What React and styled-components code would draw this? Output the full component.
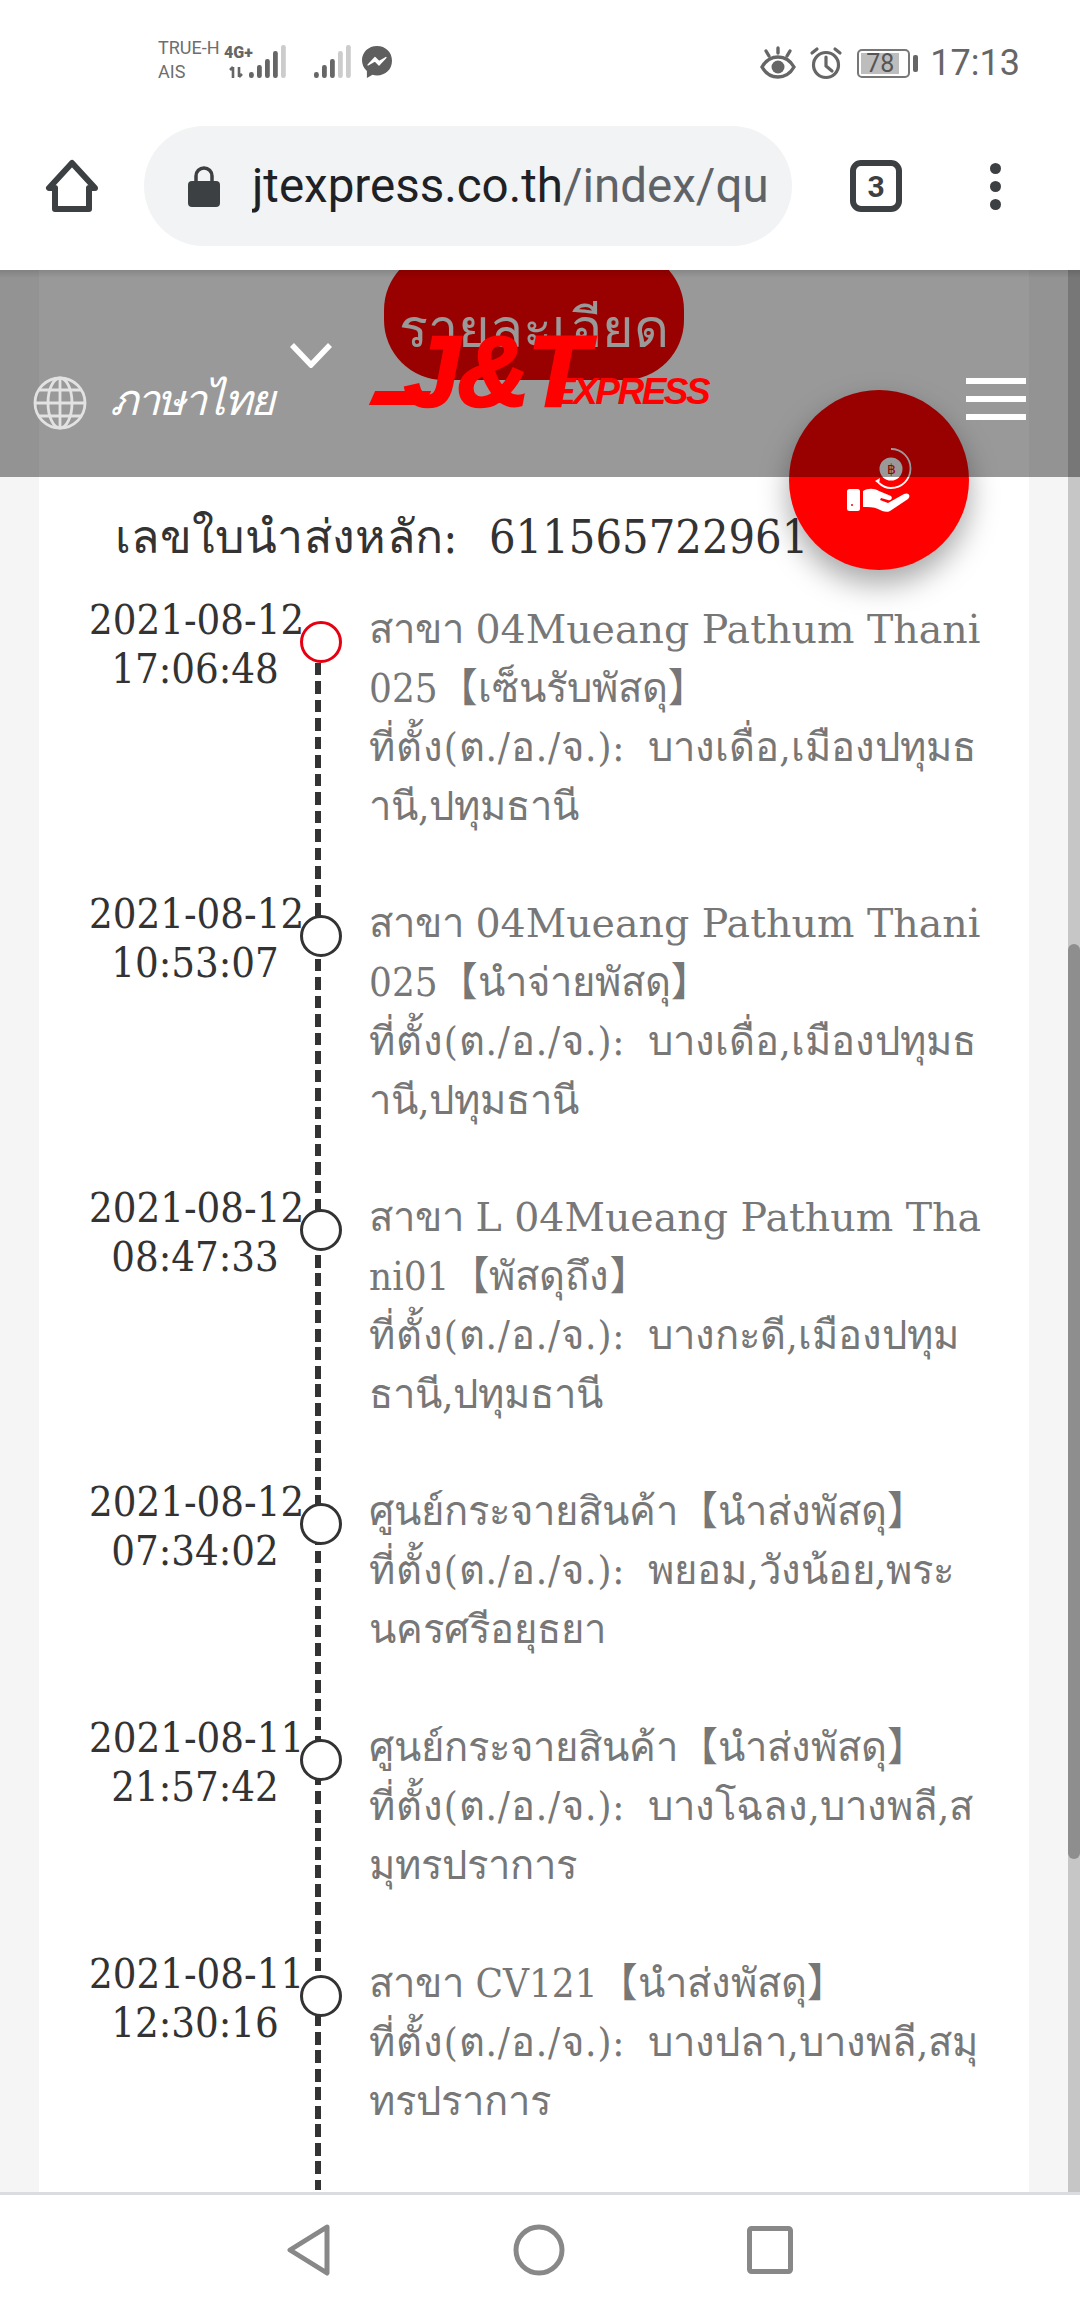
import React from "react";
import styled, { createGlobalStyle } from "styled-components";

const Global = createGlobalStyle`
  html, body { margin: 0; padding: 0; background: #fff; }
  #root { width: 1080px; height: 2310px; overflow: hidden; }
`;

const SANS = `Roboto, "Liberation Sans", sans-serif`;
const SERIF = `"DejaVu Serif", "Noto Sans CJK SC", serif`;

const Screen = styled.div`
  width: 1080px; height: 2310px; display: flex; flex-direction: column;
  font-family: ${SANS}; background: #fff; overflow: hidden;
`;
const StatusBar = styled.div`
  height: 120px; flex: none; display: flex; align-items: flex-start;
  padding: 45px 60px 0 158px; box-sizing: border-box; color: #666;
`;
const Carriers = styled.div`
  display: flex; flex-direction: column; font-size: 18px; line-height: 24px; width: 66px; color: #6e6e6e; margin-top: -9px;
`;
const Arrows = styled.svg`
  flex: none; overflow: visible;
`;
const Gap = styled.div`
  width: 25px; flex: none;
`;
const StatusRight = styled.div`
  margin-left: auto; display: flex; align-items: center; height: 36px;
`;
const Battery = styled.div`
  width: 53px; height: 29px; box-sizing: border-box; border: 2px solid #777; border-radius: 5px;
  margin-left: 14px; padding: 2px; display: flex;
`;
const BatteryFill = styled.div`
  width: 38px; background: #bdbdbd; display: flex; align-items: center; justify-content: center;
  font-size: 25px; color: #555; line-height: 1;
`;
const BatteryNub = styled.div`
  width: 5px; height: 17px; background: #666; border-radius: 2px; margin-left: 3px;
`;
const Clock = styled.div`
  font-size: 36px; margin-left: 12px; color: #666; line-height: 36px;
`;

const BrowserBar = styled.div`
  height: 150px; flex: none; display: flex; align-items: center; padding-bottom: 18px; box-sizing: border-box;
`;
const HomeSlot = styled.div`
  width: 144px; flex: none; display: flex; padding-left: 45px; box-sizing: border-box;
`;
const UrlPill = styled.div`
  width: 648px; height: 120px; border-radius: 60px; background: #f1f3f4; flex: none;
  display: flex; align-items: center; padding-left: 44px; box-sizing: border-box;
`;
const UrlText = styled.div`
  width: 516px; margin-left: 32px; overflow: hidden; white-space: nowrap;
  font-size: 47.5px; line-height: 60px; color: #202124;
  span { color: #5f6368; }
`;
const TabCount = styled.div`
  width: 52px; height: 52px; margin-left: 58px; box-sizing: border-box; border: 6px solid #3c4043; border-radius: 11px;
  display: flex; align-items: center; justify-content: center; font-size: 30px; font-weight: 700; color: #3c4043;
`;
const Dots = styled.div`
  margin-left: 88px; display: flex; flex-direction: column; gap: 7px;
  i { display: block; width: 11px; height: 11px; border-radius: 50%; background: #3c4043; }
`;

const WebView = styled.div`
  flex: none; height: 1922px; position: relative; background: #f5f5f5; overflow: hidden;
`;
const Panel = styled.div`
  margin-left: 39px; width: 990px; height: 100%; background: #fff; box-sizing: border-box; padding-top: 207px;
  font-family: ${SERIF}; font-stretch: condensed;
`;
const Title = styled.div`
  margin-left: 76px; height: 119px; padding-top: 33px; box-sizing: border-box;
  font-size: 46.5px; line-height: 54px; color: #333; white-space: pre; display: flex;
`;
const TitleLabel = styled.span`
  width: 374px; flex: none; letter-spacing: 0.3px;
`;
const Timeline = styled.div`
  position: relative; padding-left: 50px;
  height: 1594px;
`;
const DashLine = styled.div`
  position: absolute; left: 276px; top: 30px; bottom: 0; width: 6px;
  background: repeating-linear-gradient(to bottom, #333 0 12.5px, transparent 12.5px 18.5px);
`;
const Row = styled.div`
  display: flex; position: relative; padding-bottom: ${p => (p.$short ? "55px" : "54px")};
`;
const Stamp = styled.div`
  width: 212px; flex: none; text-align: center; font-size: 41.5px; line-height: 49px; color: #333; white-space: nowrap;
  margin-top: -1px;
`;
const Dot = styled.div`
  position: absolute; left: 211px; top: 25px; width: 42px; height: 42px; box-sizing: border-box; border-radius: 50%;
  background: #fff; border: 3px solid ${p => (p.$active ? "#e60012" : "#333")};
`;
const Detail = styled.div`
  margin-left: 68px; padding-top: 4px; font-size: 40px; color: #777;
`;
const Line = styled.div`
  height: 59px; line-height: 59px; white-space: pre;
`;
const Wide = styled.span`
  font-stretch: normal; font-size: 39.5px;
`;
const LocLabel = styled.span`
  letter-spacing: 0.9px;
`;

const ScrollTrack = styled.div`
  position: absolute; right: 0; top: 0; bottom: 0; width: 12px; background: #c6c6c6;
`;
const ScrollThumb = styled.div`
  position: absolute; right: 0; top: 674px; height: 915px; width: 12px; background: #8e8e8e; border-radius: 8px;
`;
const DetailsButton = styled.div`
  position: absolute; left: 384px; top: -20px; width: 300px; height: 130px; border-radius: 60px; background: #f00;
  color: #fff; display: flex; align-items: center; justify-content: center; font-family: ${SANS};
  font-size: 54px; padding-top: 26px; box-sizing: border-box; white-space: nowrap;
`;
const Fab = styled.div`
  position: absolute; left: 789px; top: 120px; width: 180px; height: 180px; border-radius: 50%; background: #f00;
  box-shadow: 0 14px 30px rgba(0,0,0,.35); display: flex; align-items: center; justify-content: center;
`;
const Overlay = styled.div`
  position: absolute; left: 0; right: 0; top: 0; height: 207px; background: rgba(0,0,0,.4);
  &::before { content: ""; position: absolute; left: 0; right: 0; top: 0; height: 8px;
    background: linear-gradient(to bottom, rgba(0,0,0,.12), transparent); }
`;
const Nav = styled.div`
  position: absolute; left: 0; right: 0; top: 0; height: 207px; display: flex; align-items: flex-start;
  padding: 0 54px 0 33px; box-sizing: border-box; font-family: ${SANS};
`;
const LangGroup = styled.div`
  display: flex; align-items: flex-start; width: 339px; flex: none; color: #fff; padding-top: 72px; box-sizing: border-box;
`;
const GlobeSlot = styled.div`
  margin-top: 34px; flex: none; display: flex;
`;
const LangLabel = styled.div`
  margin-left: 23px; margin-top: 32px; width: 180px; font-size: 43px; line-height: 52px; font-style: italic;
  white-space: nowrap; font-weight: 300; letter-spacing: -2.4px;
`;
const Logo = styled.div`
  position: relative; width: 338px; height: 75px; margin-top: 60px; color: #f00; font-family: "Liberation Sans", sans-serif;
  font-weight: 700; font-style: italic; white-space: nowrap; display: flex; align-items: flex-end; flex: none;
`;
const LogoMain = styled.div`
  font-size: 100px; line-height: 75px; margin-left: 32px; margin-bottom: -4px; letter-spacing: -2px; -webkit-text-stroke: 2.5px #f00;
`;
const LogoTail = styled.div`
  position: absolute; left: 0; bottom: 0; width: 56px; height: 14px; background: #f00; transform: skewX(-24deg);
`;
const LogoSub = styled.div`
  font-size: 37px; line-height: 30px; margin-left: -36px; margin-bottom: -2px; letter-spacing: -2.5px;
`;
const Burger = styled.div`
  margin-left: auto; margin-top: 108px; display: flex; flex-direction: column; gap: 12px;
  i { display: block; width: 60px; height: 6px; background: #fff; }
`;

const NavBar = styled.div`
  flex: 1; border-top: 3px solid #dadce0; background: #fff; display: flex; align-items: center; justify-content: center;
  padding-bottom: 5px; gap: 182px;
`;

const Eye = () => (
  <svg width="36" height="34" viewBox="0 0 36 34" fill="none" stroke="#666" strokeWidth="3.4" strokeLinecap="round">
    <path d="M2 21C6 14 12 11 18 11s12 3 16 10c-4 7-10 10-16 10S6 28 2 21Z" />
    <circle cx="18" cy="21" r="6.5" fill="#666" stroke="none" />
    <path d="M18 2v5M6 5l3 5M30 5l-3 5" />
  </svg>
);
const Alarm = () => (
  <svg width="34" height="34" viewBox="0 0 34 34" fill="none" stroke="#666" strokeWidth="3.2" strokeLinecap="round" strokeLinejoin="round" style={{ marginLeft: 13 }}>
    <circle cx="17" cy="19" r="12.5" />
    <path d="M17 11v9l6 5M3 7l5-4M31 7l-5-4" />
  </svg>
);
const BARS = [6, 13, 19, 27, 33];
const Signal = ({ on }) => (
  <svg width="40" height="34" viewBox="0 0 40 34">
    {BARS.map((h, i) => (
      <rect key={i} x={i * 8 + 1} y={33 - h} width="4.8" height={h} rx="2.2" fill={i < on ? "#666" : "#ccc"} />
    ))}
  </svg>
);
const FourG = () => (
  <Arrows width="24" height="34" viewBox="0 0 24 34">
    <text x="0" y="13" fontFamily="Roboto, sans-serif" fontWeight="900" fontSize="16" fill="#666">4G+</text>
    <path d="M9 22v11M6 25l3-3M15 22v10M15 32l3-3" stroke="#666" strokeWidth="2.6" fill="none" />
  </Arrows>
);
const Messenger = () => (
  <svg width="32" height="35" viewBox="0 0 32 35" style={{ marginLeft: 8 }}>
    <path d="M16 1C7.5 1 1 7.2 1 15.3c0 4.3 1.8 8 4.9 10.6V33l5.6-3.2c1.4.4 2.9.6 4.5.6 8.500 0 15-6.200 15-14.700S24.500 1 16 1Z" fill="#5f5f5f" />
    <path d="M7 20l7-7.500 4 4 7-4-7 7.500-4-4z" fill="#fff" stroke="#fff" strokeWidth="1.200" strokeLinejoin="round" />
  </svg>
);
const HomeIcon = () => (
  <svg width="54" height="54" viewBox="0 0 54 54" fill="none" stroke="#3c4043" strokeWidth="6" strokeLinejoin="round">
    <path d="M27 4 4 29h6v21h34V29h6Z" />
  </svg>
);
const LockIcon = () => (
  <svg width="32" height="42" viewBox="0 0 32 42">
    <path d="M8 17v-6a8 8 0 0 1 16 0v6" fill="none" stroke="#3c4043" strokeWidth="3.500" />
    <rect x="0" y="16" width="32" height="26" rx="4" fill="#3c4043" />
  </svg>
);
const Globe = () => (
  <svg width="54" height="54" viewBox="0 0 54 54" fill="none" stroke="#e2e2e2" strokeWidth="2.800">
    <circle cx="27" cy="27" r="25" />
    <ellipse cx="27" cy="27" rx="12" ry="25" />
    <path d="M27 2v50M2 27h50M6 14h42M6 40h42" />
  </svg>
);
const Chevron = styled.svg`
  flex: none;
`;
const CoinHand = () => (
  <svg width="70" height="70" viewBox="0 0 70 70">
    <rect x="3" y="44" width="13" height="22" rx="2.500" fill="#fff" />
    <circle cx="8" cy="60" r="1" fill="#f00" />
    <path d="M19 46C24 43 30 43 35 46L47 51C49 53 47 56 44 55L37 53 36 55 44 58 60 49C65 47 67 51 64 54L46 66C42 68 38 66 34 64 30 62 24 62 19 62Z" fill="#fff" />
    <circle cx="47" cy="24" r="11.500" fill="#fff" />
    <text x="47" y="29" textAnchor="middle" fontFamily="Roboto, sans-serif" fontSize="14" fill="#f00">฿</text>
    <path d="M47 4a19 19 0 0 1 0 39c-5 0-9-2-12-5" fill="none" stroke="#fff" strokeWidth="1.800" />
    <path d="M31 36l4 3 1-6z" fill="#fff" />
  </svg>
);

const Loc = ({ children }) => (
  <Line><LocLabel>ที่ตั้ง(ต./อ./จ.):</LocLabel>{"  " + children}</Line>
);

const events = [
  { d: "2021-08-12", t: "17:06:48", active: true, body: <>
    <Line>สาขา <Wide>04Mueang Pathum Thani</Wide></Line>
    <Line>025【เซ็นรับพัสดุ】</Line>
    <Loc>บางเดื่อ,เมืองปทุมธ</Loc>
    <Line>านี,ปทุมธานี</Line>
  </> },
  { d: "2021-08-12", t: "10:53:07", body: <>
    <Line>สาขา <Wide>04Mueang Pathum Thani</Wide></Line>
    <Line>025【นำจ่ายพัสดุ】</Line>
    <Loc>บางเดื่อ,เมืองปทุมธ</Loc>
    <Line>านี,ปทุมธานี</Line>
  </> },
  { d: "2021-08-12", t: "08:47:33", body: <>
    <Line>สาขา <Wide>L 04Mueang Pathum Tha</Wide></Line>
    <Line>ni01【พัสดุถึง】</Line>
    <Loc>บางกะดี,เมืองปทุม</Loc>
    <Line>ธานี,ปทุมธานี</Line>
  </> },
  { d: "2021-08-12", t: "07:34:02", short: true, body: <>
    <Line>ศูนย์กระจายสินค้า【นำส่งพัสดุ】</Line>
    <Loc>พยอม,วังน้อย,พระ</Loc>
    <Line>นครศรีอยุธยา</Line>
  </> },
  { d: "2021-08-11", t: "21:57:42", short: true, body: <>
    <Line>ศูนย์กระจายสินค้า【นำส่งพัสดุ】</Line>
    <Loc>บางโฉลง,บางพลี,ส</Loc>
    <Line>มุทรปราการ</Line>
  </> },
  { d: "2021-08-11", t: "12:30:16", short: true, body: <>
    <Line>สาขา CV121【นำส่งพัสดุ】</Line>
    <Loc>บางปลา,บางพลี,สมุ</Loc>
    <Line>ทรปราการ</Line>
  </> },
];

export default function App() {
  return (
    <Screen>
      <Global />
      <StatusBar>
        <Carriers><span>TRUE-H</span><span>AIS</span></Carriers>
        <FourG />
        <Signal on={4} />
        <Gap />
        <Signal on={3} />
        <Messenger />
        <StatusRight>
          <Eye />
          <Alarm />
          <Battery><BatteryFill>78</BatteryFill></Battery>
          <BatteryNub />
          <Clock>17:13</Clock>
        </StatusRight>
      </StatusBar>
      <BrowserBar>
        <HomeSlot><HomeIcon /></HomeSlot>
        <UrlPill>
          <LockIcon />
          <UrlText>jtexpress.co.th<span>/index/qu</span></UrlText>
        </UrlPill>
        <TabCount>3</TabCount>
        <Dots><i /><i /><i /></Dots>
      </BrowserBar>
      <WebView>
        <Panel>
          <Title><TitleLabel>เลขใบนำส่งหลัก:</TitleLabel><span>611565722961</span></Title>
          <Timeline>
            <DashLine />
            {events.map((e, i) => (
              <Row key={i} $short={e.short}>
                <Stamp>{e.d}<br />{e.t}</Stamp>
                <Dot $active={e.active} />
                <Detail>{e.body}</Detail>
              </Row>
            ))}
          </Timeline>
        </Panel>
        <ScrollTrack />
        <ScrollThumb />
        <DetailsButton>รายละเอียด</DetailsButton>
        <Fab><CoinHand /></Fab>
        <Overlay />
        <Nav>
          <LangGroup>
            <GlobeSlot><Globe /></GlobeSlot>
            <LangLabel>ภาษาไทย</LangLabel>
            <Chevron width="42" height="26" viewBox="0 0 42 26" fill="none" stroke="#fff" strokeWidth="5.500">
              <path d="M2 3 21 23 40 3" />
            </Chevron>
          </LangGroup>
          <Logo>
            <LogoTail />
            <LogoMain>J&amp;T</LogoMain>
            <LogoSub>EXPRESS</LogoSub>
          </Logo>
          <Burger><i /><i /><i /></Burger>
        </Nav>
      </WebView>
      <NavBar>
        <svg width="44" height="52" viewBox="0 0 44 52" fill="none" stroke="#888" strokeWidth="5" strokeLinejoin="round"><path d="M40 3 3 26l37 23Z" /></svg>
        <svg width="52" height="52" viewBox="0 0 52 52" fill="none" stroke="#888" strokeWidth="5"><circle cx="26" cy="26" r="23" /></svg>
        <svg width="46" height="48" viewBox="0 0 46 48" fill="none" stroke="#888" strokeWidth="5"><rect x="2.500" y="2.500" width="41" height="43" rx="2" /></svg>
      </NavBar>
    </Screen>
  );
}
